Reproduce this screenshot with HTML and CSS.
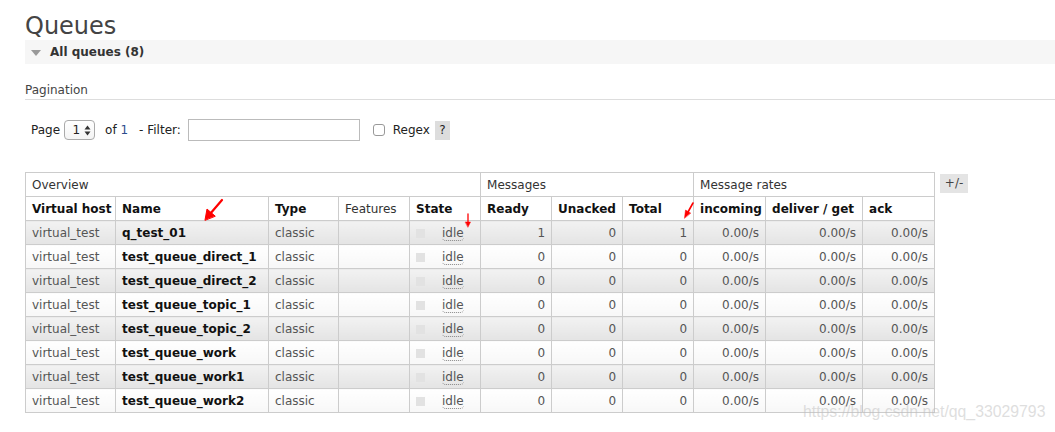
FILE: index.html
```html
<!DOCTYPE html>
<html>
<head>
<meta charset="utf-8">
<link rel="stylesheet" href="styles.css">
</head>
<body>
<div class="page">
  <h1 class="title">Queues</h1>
  <div class="section-bar"><span class="tri"></span><span class="section-name">All queues (8)</span></div>
  <div class="pag-head">Pagination</div>
  <div class="pag-row">
    <span class="lbl">Page</span>
    <span class="select">1<span class="arrows"><svg width="7" height="11" viewBox="0 0 7 11"><path d="M3.5 0.5 L6.5 4.5 L0.5 4.5 Z M3.5 10.5 L6.5 6.5 L0.5 6.5 Z" fill="#333"/></svg></span></span>
    <span class="of">of <span class="num">1</span></span>
    <span class="filter">- Filter:</span>
    <span class="input"></span>
    <span class="check"></span>
    <span class="regex">Regex</span>
    <span class="help">?</span>
  </div>
  <div class="table-wrap">
    <table class="queues">
      <colgroup>
        <col style="width:90px"><col style="width:153px"><col style="width:70px"><col style="width:71px"><col style="width:71px">
        <col style="width:71px"><col style="width:71px"><col style="width:71px"><col style="width:72px"><col style="width:97px"><col style="width:72px">
      </colgroup>
      <thead>
        <tr class="grp"><th colspan="5">Overview</th><th colspan="3">Messages</th><th colspan="3">Message rates</th></tr>
        <tr class="hdr"><th>Virtual host</th><th>Name</th><th>Type</th><th class="norm">Features</th><th>State</th><th>Ready</th><th>Unacked</th><th>Total</th><th>incoming</th><th>deliver / get</th><th>ack</th></tr>
      </thead>
      <tbody>
        <tr class="alt"><td>virtual_test</td><td class="name">q_test_01</td><td>classic</td><td></td><td class="state"><span class="sq"></span><span class="idle">idle</span></td><td class="r">1</td><td class="r">0</td><td class="r">1</td><td class="r">0.00/s</td><td class="r">0.00/s</td><td class="r">0.00/s</td></tr>
        <tr><td>virtual_test</td><td class="name">test_queue_direct_1</td><td>classic</td><td></td><td class="state"><span class="sq"></span><span class="idle">idle</span></td><td class="r">0</td><td class="r">0</td><td class="r">0</td><td class="r">0.00/s</td><td class="r">0.00/s</td><td class="r">0.00/s</td></tr>
        <tr class="alt"><td>virtual_test</td><td class="name">test_queue_direct_2</td><td>classic</td><td></td><td class="state"><span class="sq"></span><span class="idle">idle</span></td><td class="r">0</td><td class="r">0</td><td class="r">0</td><td class="r">0.00/s</td><td class="r">0.00/s</td><td class="r">0.00/s</td></tr>
        <tr><td>virtual_test</td><td class="name">test_queue_topic_1</td><td>classic</td><td></td><td class="state"><span class="sq"></span><span class="idle">idle</span></td><td class="r">0</td><td class="r">0</td><td class="r">0</td><td class="r">0.00/s</td><td class="r">0.00/s</td><td class="r">0.00/s</td></tr>
        <tr class="alt"><td>virtual_test</td><td class="name">test_queue_topic_2</td><td>classic</td><td></td><td class="state"><span class="sq"></span><span class="idle">idle</span></td><td class="r">0</td><td class="r">0</td><td class="r">0</td><td class="r">0.00/s</td><td class="r">0.00/s</td><td class="r">0.00/s</td></tr>
        <tr><td>virtual_test</td><td class="name">test_queue_work</td><td>classic</td><td></td><td class="state"><span class="sq"></span><span class="idle">idle</span></td><td class="r">0</td><td class="r">0</td><td class="r">0</td><td class="r">0.00/s</td><td class="r">0.00/s</td><td class="r">0.00/s</td></tr>
        <tr class="alt"><td>virtual_test</td><td class="name">test_queue_work1</td><td>classic</td><td></td><td class="state"><span class="sq"></span><span class="idle">idle</span></td><td class="r">0</td><td class="r">0</td><td class="r">0</td><td class="r">0.00/s</td><td class="r">0.00/s</td><td class="r">0.00/s</td></tr>
        <tr><td>virtual_test</td><td class="name">test_queue_work2</td><td>classic</td><td></td><td class="state"><span class="sq"></span><span class="idle">idle</span></td><td class="r">0</td><td class="r">0</td><td class="r">0</td><td class="r">0.00/s</td><td class="r">0.00/s</td><td class="r">0.00/s</td></tr>
      </tbody>
    </table>
    <span class="plusminus">+/-</span>
  </div>
</div>
<svg class="annot" width="1055" height="432" viewBox="0 0 1055 432">
  <g stroke="#f00" stroke-width="2.2" fill="#f00" stroke-linecap="round">
    <line x1="222" y1="200" x2="210" y2="214"/>
    <path d="M205 220 L207 209 L215 216 Z" stroke-width="1"/>
    <line x1="468" y1="214" x2="468" y2="223" stroke-width="1.3"/>
    <path d="M465.5 222 L470.5 222 L468 227 Z" stroke-width="0.5"/>
    <line x1="693" y1="203" x2="688" y2="212" stroke-width="1.6"/>
    <path d="M684.5 218 L685.5 210 L690.5 213 Z" stroke-width="0.5"/>
  </g>
</svg>
<div class="watermark">https://blog.csdn.net/qq_33029793</div>
</body>
</html>
```
FILE: styles.css
```css
html, body {
  margin: 0;
  padding: 0;
  background: #fff;
}
body {
  font-family: "DejaVu Sans", Verdana, sans-serif;
  font-size: 12px;
  color: #444;
  position: relative;
  width: 1055px;
  height: 432px;
  overflow: hidden;
}
.page {
  padding-left: 25px;
}
.title {
  margin: 12px 0 0 0;
  font-size: 24px;
  line-height: 28px;
  font-weight: normal;
  color: #444;
}
.section-bar {
  height: 24px;
  background: #f6f6f6;
  display: flex;
  align-items: center;
}
.tri {
  width: 0;
  height: 0;
  border-left: 5px solid transparent;
  border-right: 5px solid transparent;
  border-top: 6px solid #999;
  margin: 1px 9px 0 6px;
}
.section-name {
  font-weight: bold;
  color: #333;
  font-size: 12px;
}
.pag-head {
  margin-top: 17px;
  height: 18px;
  line-height: 18px;
  border-bottom: 1px solid #ddd;
  color: #444;
}
.pag-row {
  margin-top: 18px;
  height: 24px;
  display: flex;
  align-items: center;
  padding-left: 6px;
  color: #222;
}
.select {
  margin-left: 4px;
  width: 28px;
  height: 18px;
  border: 1px solid #aaa;
  border-radius: 4px;
  display: inline-flex;
  align-items: center;
  justify-content: flex-end;
  padding-right: 1px;
  box-sizing: content-box;
  gap: 4px;
  background: linear-gradient(#fff, #f4f4f4);
}
.arrows {
  display: inline-flex;
  margin-right: 2px;
}
.of {
  margin-left: 10px;
}
.num {
  color: #2b4c8c;
}
.filter {
  margin-left: 11px;
}
.input {
  margin-left: 7px;
  width: 170px;
  height: 20px;
  border: 1px solid #bbb;
  background: #fff;
}
.check {
  margin-left: 13px;
  width: 10px;
  height: 10px;
  border: 1px solid #999;
  border-radius: 3px;
  background: #fff;
}
.regex {
  margin-left: 8px;
}
.help {
  margin-left: 5px;
  width: 15px;
  height: 19px;
  line-height: 19px;
  text-align: center;
  background: #ddd;
}
.table-wrap {
  margin-top: 30px;
  display: flex;
  align-items: flex-start;
}
.queues {
  border-collapse: collapse;
  table-layout: fixed;
  width: 910px;
  border: 1px solid #ccc;
}
.queues th, .queues td {
  border: 1px solid #ccc;
  height: 24px;
  padding: 0 6px;
  text-align: left;
  white-space: nowrap;
  overflow: hidden;
  box-sizing: border-box;
}
.queues th {
  font-weight: bold;
  color: #111;
  background: #fff;
}
.queues .grp th {
  font-weight: normal;
  color: #333;
}
.queues th.norm {
  font-weight: normal;
  color: #333;
}
.queues td {
  color: #555;
  background: linear-gradient(#ffffff, #f7f7f7);
}
.queues tr.alt td {
  background: linear-gradient(#f2f2f2, #e4e4e4);
}
.queues td.name {
  font-weight: bold;
  color: #111;
}
.queues td.r {
  text-align: right;
}
.state {
  position: relative;
}
.sq {
  display: inline-block;
  width: 9px;
  height: 9px;
  background: #e2e2e2;
  vertical-align: -1px;
}
.idle {
  margin-left: 17px;
  border-bottom: 1px dotted #888;
  border-radius: 0 0 4px 4px;
  color: #555;
}
.plusminus {
  margin-left: 5px;
  margin-top: 2px;
  width: 28px;
  height: 19px;
  line-height: 19px;
  text-align: center;
  background: #e4e4e4;
  color: #444;
}
.annot {
  position: absolute;
  left: 0;
  top: 0;
  pointer-events: none;
}
.watermark {
  position: absolute;
  left: 803px;
  top: 403px;
  font-family: "Liberation Sans", Arial, sans-serif;
  font-size: 15.8px;
  color: rgba(190, 190, 190, 0.5);
}
```
